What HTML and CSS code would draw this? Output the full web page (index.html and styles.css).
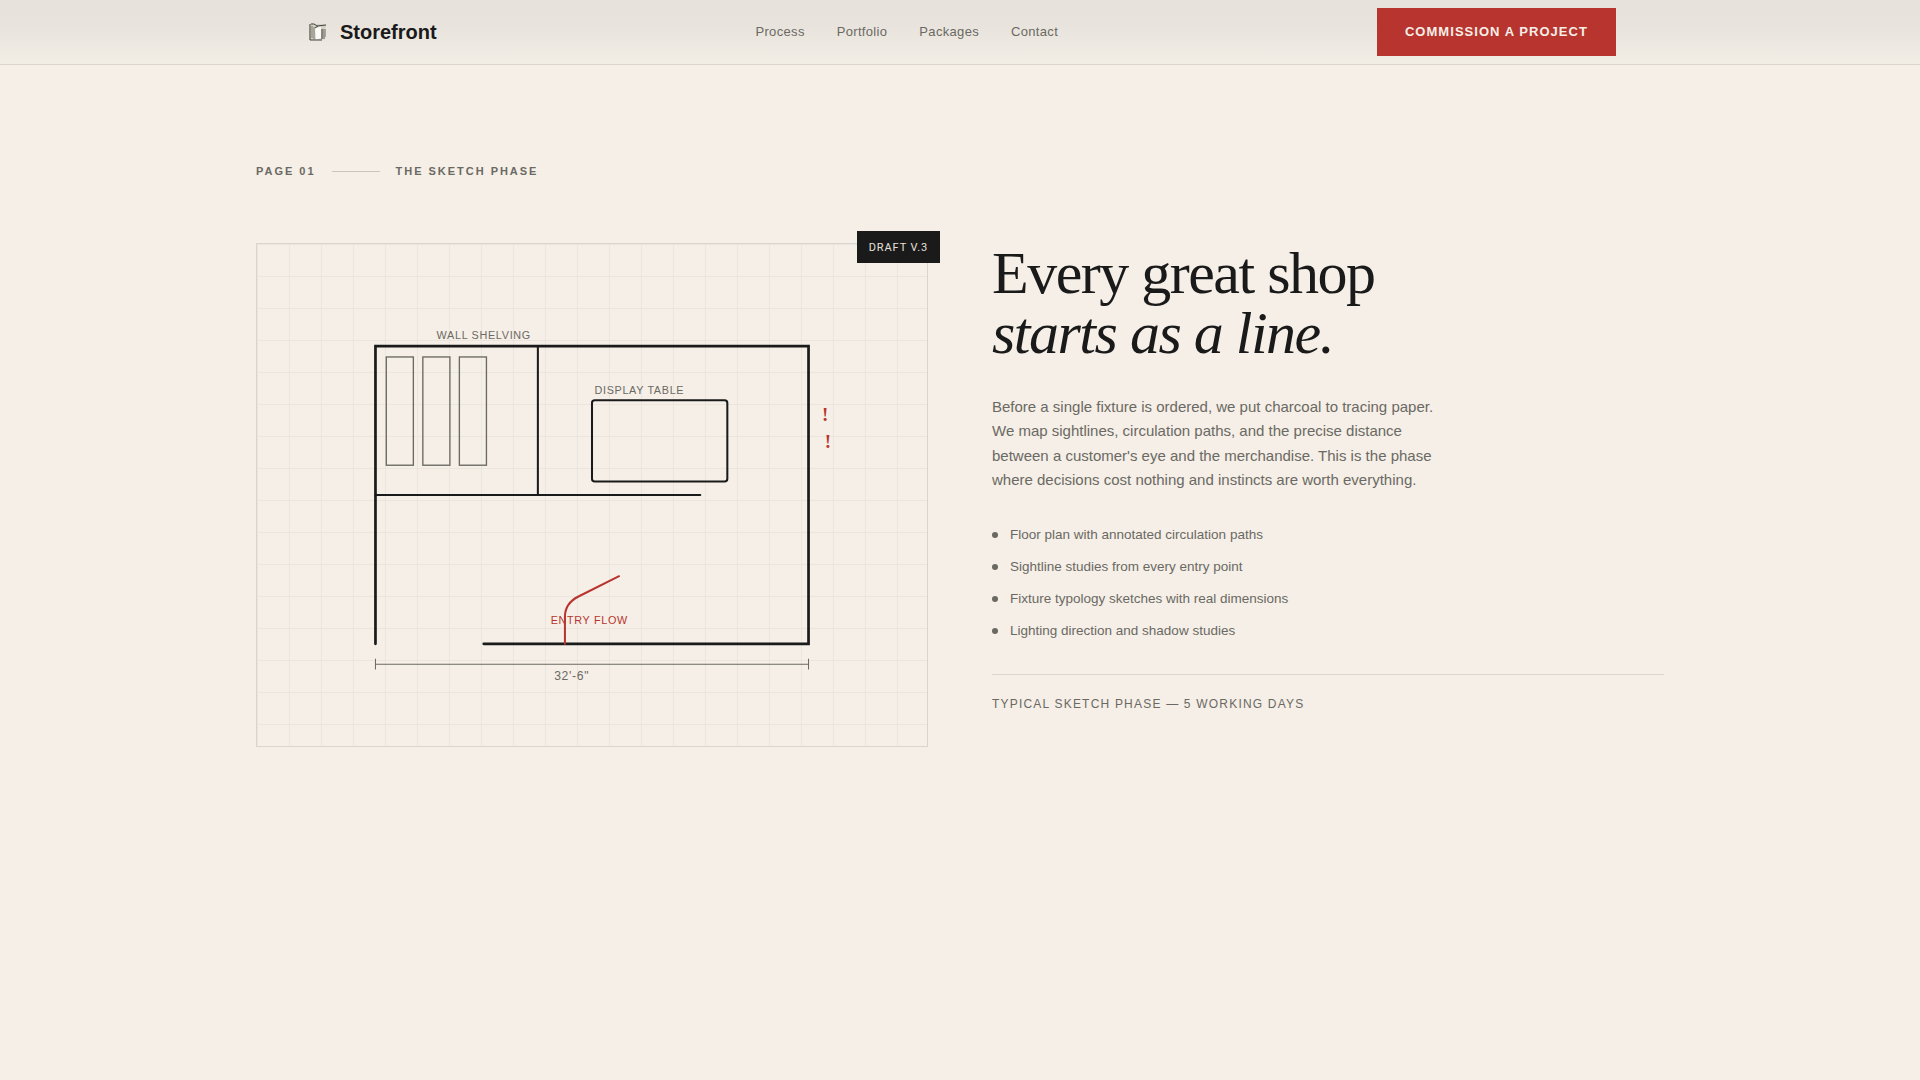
FILE: index.html
```html
<!DOCTYPE html>
<html lang="en">
<head>
    <meta charset="UTF-8">
    <meta name="viewport" content="width=device-width, initial-scale=1.0">
    <title>Storefront</title>
    <link rel="stylesheet" href="styles.css">
</head>
<body>
    <header class="site-header">
        <div class="header-inner">
            <a href="#" class="logo">
                <svg class="logo-icon" viewBox="0 0 20 20" fill="none" aria-hidden="true">
                    <path d="M1 2l4-1 3 1 10 0v3l-1 1v11l-4 1H1z" fill="#d5d2c8"/>
                    <path d="M7 6l6-1v11l-5 2z" fill="#fbfaf4"/>
                    <path d="M2 2v16h12M3 2h3l3 2 9-1M7 6l3-2" stroke="#45433d" stroke-width="1"/>
                    <path d="M6 5v12M14 7v10" stroke="#7b796f" stroke-width="1"/>
                    <path d="M3 5h2M3 7h2M3 9h2M3 11h2M3 13h2M3 15h2" stroke="#7b796f" stroke-width="1"/>
                    <path d="M13 8h5M13 10h5M13 12h5M13 14h5M13 16h4" stroke="#66645b" stroke-width="1"/>
                </svg>
                <span>Storefront</span>
            </a>
            <nav class="nav">
                <a href="#process">Process</a>
                <a href="#portfolio">Portfolio</a>
                <a href="#packages">Packages</a>
                <a href="#contact">Contact</a>
            </nav>
            <button type="button" class="cta">Commission a Project</button>
        </div>
    </header>

    <main class="page" id="process">
        <div class="page-label">
            <span>Page 01</span>
            <span class="rule"></span>
            <span>The Sketch Phase</span>
        </div>

        <div class="spread">
            <div class="sketch">
                <svg class="plan" viewBox="0 0 400 300" fill="none">
                    <!-- outer walls, open at the entry -->
                    <path class="wall" d="M40 260V40H360V260H120"/>
                    <!-- partitions -->
                    <path class="partition" d="M160 40V150M40 150H280"/>
                    <!-- shelving -->
                    <rect class="shelf" x="48" y="48" width="20" height="80"/>
                    <rect class="shelf" x="75" y="48" width="20" height="80"/>
                    <rect class="shelf" x="102" y="48" width="20" height="80"/>
                    <!-- display table -->
                    <rect class="table" x="200" y="80" width="100" height="60" rx="2"/>
                    <!-- dimension line -->
                    <path class="dimension" d="M40 275H360M40 271V279M360 271V279"/>
                    <text class="note" x="120" y="35">WALL SHELVING</text>
                    <text class="note" x="235" y="75">DISPLAY TABLE</text>
                    <text class="note entry" x="198" y="245">ENTRY FLOW</text>
                    <text class="measure" x="185" y="287">32'-6"</text>
                    <!-- entry flow -->
                    <path class="flow" d="M180 260V240Q180 230 190 225L220 210"/>
                    <text class="mark" x="370" y="95">!</text>
                    <text class="mark" x="372" y="115">!</text>
                </svg>
                <div class="tag">DRAFT V.3</div>
            </div>

            <div class="copy">
                <h1>Every great shop<br><em>starts as a line.</em></h1>
                <p class="intro">Before a single fixture is ordered, we put charcoal to tracing paper. We map sightlines, circulation paths, and the precise distance between a customer's eye and the merchandise. This is the phase where decisions cost nothing and instincts are worth everything.</p>
                <ul class="deliverables">
                    <li>Floor plan with annotated circulation paths</li>
                    <li>Sightline studies from every entry point</li>
                    <li>Fixture typology sketches with real dimensions</li>
                    <li>Lighting direction and shadow studies</li>
                </ul>
                <p class="timing">Typical sketch phase — 5 working days</p>
            </div>
        </div>
    </main>
</body>
</html>
```
FILE: styles.css
```css
* {
    box-sizing: border-box;
    margin: 0;
    padding: 0;
}
body {
    font-family: "Liberation Sans", Arial, sans-serif;
    background: #f5efe7;
    color: #1a1a1a;
}
a {
    color: inherit;
    text-decoration: none;
}

/* header */
.site-header {
    background: linear-gradient(#e7e3dc 0%, #e8e4dd 40%, #f2eee6 100%);
    border-bottom: 1px solid #dad5ce;
}
.header-inner {
    max-width: 1408px;
    height: 64px;
    margin: 0 auto;
    padding: 0 48px;
    display: flex;
    align-items: center;
    justify-content: space-between;
}
.logo {
    display: flex;
    align-items: center;
    gap: 8px;
    font-size: 20px;
    font-weight: bold;
}
.logo-icon {
    width: 28px;
    height: 20px;
}
.nav {
    display: flex;
    gap: 32px;
    font-size: 13px;
    line-height: 20px;
    letter-spacing: 0.025em;
    color: #6b6963;
}
.cta {
    height: 48px;
    padding: 0 28px 2px;
    border: none;
    background: #b8342e;
    color: #f5efe7;
    font-family: inherit;
    font-size: 13px;
    font-weight: bold;
    letter-spacing: 0.08em;
    text-transform: uppercase;
    cursor: pointer;
}

/* page */
.page {
    max-width: 1408px;
    margin: 0 auto;
    padding: 96px 0;
}
.page-label {
    display: flex;
    align-items: center;
    gap: 16px;
    margin-bottom: 62px;
    font-size: 11px;
    line-height: 20px;
    font-weight: bold;
    letter-spacing: 0.18em;
    text-transform: uppercase;
    color: #6b6963;
}
.rule {
    width: 48px;
    height: 1px;
    background: #cac4bd;
}
.spread {
    display: grid;
    grid-template-columns: 1fr 1fr;
    gap: 64px;
}

/* floor plan */
.sketch {
    position: relative;
    aspect-ratio: 4 / 3;
    padding: 48px;
    border: 1px solid #d9d5ce;
    background-image:
        linear-gradient(#eae5dd 1px, transparent 1px),
        linear-gradient(90deg, #eae5dd 1px, transparent 1px);
    background-size: 32px 32px;
}
.plan {
    display: block;
    width: 100%;
    height: 100%;
}
.wall {
    stroke: #1a1a1a;
    stroke-width: 2;
    stroke-linecap: round;
}
.partition,
.table {
    stroke: #1a1a1a;
    stroke-width: 1.5;
    stroke-linecap: round;
}
.shelf {
    stroke: #6b6963;
    stroke-width: 1;
}
.dimension {
    stroke: #6b6963;
    stroke-width: 0.75;
}
.flow {
    stroke: #b8342e;
    stroke-width: 1.5;
    stroke-linecap: round;
}
.note,
.measure {
    font-size: 8px;
    letter-spacing: 0.5px;
    text-anchor: middle;
    fill: #6b6963;
}
.measure {
    font-size: 9px;
}
.entry,
.mark {
    fill: #b8342e;
}
.mark {
    font-family: "Liberation Serif", serif;
    font-size: 14px;
    font-weight: bold;
}
.tag {
    position: absolute;
    top: -13px;
    right: -13px;
    padding: 8px 12px 6px;
    background: #1a1a1a;
    color: #e6e1da;
    font-family: Roboto, sans-serif;
    font-size: 11px;
    line-height: 18px;
    letter-spacing: 0.08em;
}

/* copy */
h1 {
    margin-bottom: 32px;
    font-family: "Liberation Serif", serif;
    font-size: 60px;
    line-height: 60px;
    font-weight: normal;
    letter-spacing: -0.025em;
}
.copy {
    font-size: 15px;
}
.intro {
    max-width: 448px;
    margin-bottom: 32px;
    line-height: 1.625;
    color: #6b6963;
}
.deliverables {
    display: grid;
    gap: 12px;
    list-style: none;
    font-size: 0.9em;
    line-height: 1.5;
    color: #6b6963;
}
.deliverables li {
    display: flex;
    align-items: center;
    gap: 12px;
}
.deliverables li::before {
    content: "";
    width: 6px;
    height: 6px;
    border-radius: 50%;
    background: #6b6963;
}
.timing {
    margin-top: 32px;
    padding-top: 20px;
    border-top: 1px solid #d9d5ce;
    font-size: 12px;
    line-height: 18px;
    letter-spacing: 0.1em;
    text-transform: uppercase;
    color: #6b6963;
}
```
